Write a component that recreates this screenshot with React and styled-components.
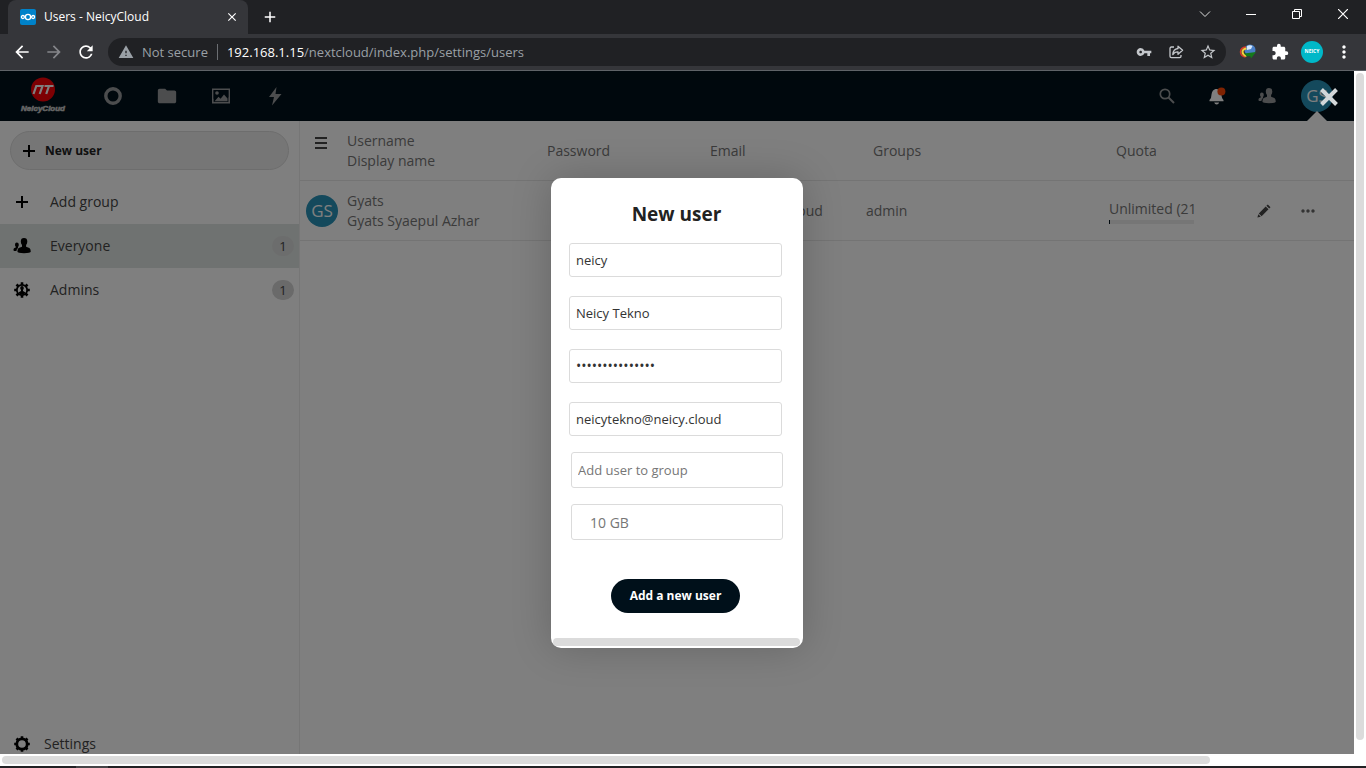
import React from "react";
import styled, { createGlobalStyle } from "styled-components";
import {
  MdAdd, MdArrowBack, MdArrowForward, MdClose, MdExtension, MdFolder,
  MdMoreHoriz, MdMoreVert, MdRefresh, MdStarBorder,
  MdVpnKey, MdWarning,
} from "react-icons/md";

const GlobalStyle = createGlobalStyle`
  *, *::before, *::after { box-sizing: border-box; }
  body { margin: 0; font-family: "Open Sans", "Noto Sans", sans-serif; font-size: 14px; line-height: 20px; }
  button, input, select { font-family: inherit; margin: 0; }
  a { color: inherit; text-decoration: none; }
  svg { display: block; flex: none; }
`;

/* ---------- browser chrome ---------- */
const Browser = styled.div`
  height: 100vh;
  display: flex;
  flex-direction: column;
  overflow: hidden;
  background: #fff;
`;
const TabStrip = styled.div`
  height: 34px;
  display: flex;
  align-items: center;
  padding-left: 8px;
  background: #202124;
  color: #fff;
`;
const Tab = styled.div`
  width: 240px;
  height: 34px;
  padding: 0 8px 0 12px;
  display: flex;
  align-items: center;
  gap: 8px;
  border-radius: 8px 8px 0 0;
  background: #35363a;
  font-size: 12px;
`;
const TabTitle = styled.span`
  flex: 1;
`;
const PlainButton = styled.button`
  width: ${(p) => p.$width || 16}px;
  height: ${(p) => p.$height || 16}px;
  padding: 0;
  border: 0;
  background: none;
  color: ${(p) => p.$color || "inherit"};
  display: flex;
  align-items: center;
  justify-content: center;
  flex: none;
`;
const NewTab = styled(PlainButton)`
  margin-left: 12px;
`;
const WindowControls = styled.div`
  margin-left: auto;
  height: 28px;
  align-self: flex-start;
  display: flex;
`;
const Toolbar = styled.div`
  height: 37px;
  display: flex;
  align-items: center;
  padding: 0 6px;
  background: #35363a;
  border-bottom: 1px solid #5f6368;
  color: #fff;
`;
const AddressBar = styled.div`
  flex: 1;
  height: 28px;
  margin: 0 6px;
  padding: 0 10px;
  display: flex;
  align-items: center;
  border-radius: 14px;
  background: #202124;
  color: #9aa0a6;
  font-size: 13px;
`;
const Security = styled.span`
  margin-left: 8px;
  padding-right: 9px;
  border-right: 1px solid #6b6e72;
  line-height: 16px;
`;
const Address = styled.span`
  flex: 1;
  padding-left: 9px;
  b { font-weight: 400; color: #fff; }
`;
const AddressActions = styled.div`
  display: flex;
  gap: 16px;
  color: #c4c7cb;
`;
const Profile = styled.span`
  width: 22px;
  height: 22px;
  border-radius: 50%;
  background: #00b8c8;
  color: #fff;
  font-size: 5px;
  font-weight: 700;
  line-height: 20px;
  text-align: center;
`;

/* ---------- page viewport ---------- */
const Frame = styled.div`
  flex: 1;
  min-height: 0;
  display: grid;
  grid-template-columns: 1fr 12px;
  grid-template-rows: minmax(0, 1fr) 12px;
`;
const Viewport = styled.div`
  position: relative;
  display: flex;
  flex-direction: column;
  overflow: hidden;
  background: #fff;
`;
const VerticalTrack = styled.div`
  padding: 2px 2px 14px;
`;
const HorizontalTrack = styled.div`
  padding: 2px;
`;
const Thumb = styled.div`
  width: ${(p) => p.$width || "100%"};
  height: ${(p) => p.$height || "8px"};
  border-radius: 4px;
  background: #dbdbdb;
`;
const Taskbar = styled.div`
  height: 2px;
  padding-left: 76px;
  background: #222124;
`;
const TaskbarItem = styled.div`
  width: 32px;
  height: 2px;
  background: #454447;
`;

/* ---------- app header ---------- */
const Header = styled.header`
  height: 50px;
  flex: none;
  display: flex;
  align-items: center;
  justify-content: space-between;
  padding: 0 21px 0 19px;
  background: #00101a;
  color: #999b9d;
`;
const HeaderGroup = styled.nav`
  display: flex;
  align-items: center;
`;
const Logo = styled.a`
  width: 48px;
  margin-right: 19px;
`;
const AppLink = styled.a`
  width: ${(p) => p.$width || 54}px;
  height: 50px;
  display: flex;
  align-items: center;
  justify-content: center;
`;
const UserMenu = styled.a`
  position: relative;
  height: 50px;
  margin-left: 9px;
  display: flex;
  align-items: center;
  &::after {
    content: "";
    position: absolute;
    bottom: 0;
    left: 6px;
    border: 10px solid transparent;
    border-top-width: 0;
    border-bottom-color: #fff;
  }
`;
const Avatar = styled.span`
  width: 32px;
  height: 32px;
  display: block;
  border-radius: 50%;
  background: #2892b8;
  color: #fff;
  font-size: 17px;
  line-height: 32px;
  text-align: center;
`;

/* ---------- sidebar ---------- */
const Main = styled.div`
  flex: 1;
  min-height: 0;
  display: flex;
`;
const Sidebar = styled.aside`
  width: 300px;
  flex: none;
  display: flex;
  flex-direction: column;
  border-right: 1px solid #ededed;
  color: #222;
`;
const NewUser = styled.button`
  height: 39px;
  flex: none;
  margin: 10px 10px;
  padding: 0 9px;
  display: flex;
  align-items: center;
  gap: 7px;
  border: 1px solid #dbdbdb;
  border-radius: 20px;
  background: #ededed;
  color: #222;
  font-size: 12px;
  font-weight: 700;
  svg { color: #000; }
`;
const NavItem = styled.a`
  height: 44px;
  flex: none;
  padding: 0 5px 0 13px;
  display: flex;
  align-items: center;
  gap: ${(p) => p.$gap || 19}px;
  background: ${(p) => (p.$active ? "#dfe4e2" : "transparent")};
  font-size: 14px;
  color: #444;
  svg { color: #000; }
`;
const NavLabel = styled.span`
  flex: 1;
`;
const Counter = styled.span`
  width: 22px;
  height: 20px;
  border-radius: 10px;
  background: ${(p) => (p.$soft ? "#d9dbda" : "#d4d4d4")};
  font-size: 13px;
  text-align: center;
`;
const SidebarFooter = styled.div`
  height: 32px;
  margin-top: auto;
`;

/* ---------- users table ---------- */
const Content = styled.main`
  flex: 1;
  min-width: 0;
`;
const Users = styled.table`
  width: 100%;
  table-layout: fixed;
  border-collapse: separate;
  border-spacing: 0;
  color: #767676;
`;
const Row = styled.tr`
  height: 60px;
`;
const HeadCell = styled.th`
  height: 60px;
  padding: 1px 0 0 ${(p) => p.$indent || 0}px;
  border-bottom: 1px solid #e8e8e8;
  font-weight: 400;
  text-align: left;
  vertical-align: ${(p) => p.$align || "middle"};
`;
const Cell = styled.td`
  height: 60px;
  padding: 1px 0 0 ${(p) => p.$indent || 0}px;
  border-bottom: 1px solid #e8e8e8;
  white-space: nowrap;
`;
const Quota = styled.div`
  width: 85px;
  overflow: hidden;
`;
const QuotaBar = styled.div`
  height: 4px;
  margin-top: 1px;
  background: #ededed;
  border-left: 1px solid #00101a;
`;

/* ---------- dialog ---------- */
const Overlay = styled.div`
  position: absolute;
  inset: 0;
  display: flex;
  align-items: center;
  justify-content: center;
  background: rgba(0, 0, 0, 0.5);
`;
const CloseDialog = styled(PlainButton)`
  position: absolute;
  top: 16px;
  right: 15px;
`;
const Dialog = styled.form`
  width: 252px;
  height: 470px;
  padding: 22px 3px 2px 2px;
  display: flex;
  flex-direction: column;
  border-radius: 10px;
  background: #fff;
  box-shadow: 0 0 40px rgba(0, 0, 0, 0.2);
  overflow: hidden;
`;
const Title = styled.h2`
  margin: 0 0 15px;
  font-size: 19px;
  line-height: 28px;
  font-weight: 700;
  color: #222;
  text-align: center;
`;
const Fields = styled.div`
  display: flex;
  flex-direction: column;
  gap: ${(p) => p.$gap}px;
  padding: ${(p) => p.$padding};
`;
const Field = styled.input`
  width: 100%;
  height: ${(p) => p.$height || 34}px;
  padding: 0 6px;
  border: 1px solid #dbdbdb;
  border-radius: 3px;
  background: #fff;
  color: #333;
  font-size: 13px;
  outline: 0;
  &[type="password"] { font-size: 14px; }
  &::placeholder { color: #767676; opacity: 1; }
`;
const QuotaSelect = styled.select`
  width: 100%;
  height: 36px;
  padding: 1px 18px 0;
  border: 1px solid #dbdbdb;
  border-radius: 3px;
  background: #fff;
  color: #767676;
  font-size: 14px;
  appearance: none;
`;
const Submit = styled.button`
  width: 129px;
  height: 34px;
  margin: 39px 0 25px 58px;
  padding: 0;
  border: 0;
  border-radius: 17px;
  background: #00101a;
  color: #fff;
  font-size: 12px;
  font-weight: 700;
`;

/* ---------- drawings ---------- */
const Favicon = () => (
  <svg width="16" height="16" viewBox="0 0 16 16">
    <rect width="16" height="16" rx="2" fill="#0082c9" />
    <g fill="none" stroke="#fff" strokeWidth="1.3">
      <circle cx="8" cy="8" r="2.6" /><circle cx="2.9" cy="8" r="1.5" /><circle cx="13.1" cy="8" r="1.5" />
    </g>
  </svg>
);
const Chevron = () => (
  <svg width="12" height="12" viewBox="0 0 12 12" fill="none" stroke="#ddd"><path d="M1 3.5 6 8.5 11 3.5" /></svg>
);
const Minimize = () => (
  <svg width="10" height="10" viewBox="0 0 10 10"><path d="M0 5h10v1H0z" fill="#fff" /></svg>
);
const Restore = () => (
  <svg width="10" height="10" viewBox="0 0 10 10" fill="none" stroke="#fff"><path d="M.5 2.5h7v7h-7zM2.500 2.500v-2h7v7h-2" /></svg>
);
const WindowClose = () => (
  <svg width="10" height="10" viewBox="0 0 10 10" stroke="#fff" strokeWidth="1.2"><path d="M0 0 10 10M10 0 0 10" /></svg>
);
const Share = () => (
  <svg width="16" height="16" viewBox="0 0 16 16" fill="none" stroke="currentColor" strokeWidth="1.3" strokeLinejoin="round">
    <path d="M6 3H3.4Q2 3 2 4.4v7.9q0 1.4 1.4 1.4h8.2q1.4 0 1.4-1.4V11" />
    <path d="M10 2.2 14.6 6.2 10 10.2V7.9Q6.6 7.8 4.8 10.6 5.2 5 10 4.500z" />
  </svg>
);
const Globe = () => (
  <svg width="18" height="16" viewBox="0 0 18 16">
    <circle cx="11" cy="6" r="5.5" fill="#4a80c8" />
    <path d="M8 2q3-1.500 5.500 0L12 5 8 6z" fill="#d6e8fb" />
    <path d="M7 3Q1.500 3.500 1.500 8q.2 4 5 5" fill="none" stroke="#d93a2b" strokeWidth="1.500" />
    <path d="M7.500 4.500Q3.500 5 3.500 8q.2 3 4 4" fill="none" stroke="#f1d13a" strokeWidth="2" />
    <path d="M5 9.500 17 8l-5 6.500-.8-2.500Q7 13 5 9.500z" fill="#157a1b" />
  </svg>
);
const Brand = () => (
  <svg width="48" height="38" viewBox="0 0 48 38">
    <circle cx="24" cy="12.500" r="12" fill="#fb0007" />
    <path d="M14.500 17 17.300 9h6.200l-2.800 8M25.500 9h9M30 9 27.200 17" fill="none" stroke="#fff" strokeWidth="2.200" />
    <text x="2" y="34" fill="#c8c8c8" stroke="#c8c8c8" strokeWidth=".6" fontFamily="Liberation Sans Narrow, Liberation Sans, sans-serif" fontSize="8" fontWeight="700" fontStyle="italic">NeicyCloud</text>
  </svg>
);
const Ring = () => (
  <svg width="20" height="20" viewBox="0 0 20 20"><circle cx="10" cy="10" r="7.2" fill="none" stroke="currentColor" strokeWidth="3.4" /></svg>
);
const Photos = () => (
  <svg width="20" height="20" viewBox="0 0 20 20">
    <path fill="currentColor" fillRule="evenodd" d="M1 2.500h18v15H1zM2.600 4.100v9l3.400-3 2.500 2.400 5-5 3.900 4V4.100z" />
    <path fill="#00101a" d="M2.600 4.100h14.800v11.800H2.600z" />
    <path fill="currentColor" d="M3.600 15.300 7.500 10.800 9.600 12.700 13 8.500 16.500 12.500V15.300z" />
    <circle cx="6" cy="7" r="1.8" fill="currentColor" />
  </svg>
);
const Bolt = () => (
  <svg width="18" height="20" viewBox="0 0 18 20"><path fill="currentColor" d="M10.500 1 3 11h5l-2 8.500L15.500 8h-6z" /></svg>
);
const Search = () => (
  <svg width="18" height="18" viewBox="0 0 18 18" fill="none" stroke="currentColor"><circle cx="7" cy="7" r="4.700" strokeWidth="1.700" /><path d="M10.500 10.500 16 16" strokeWidth="2" /></svg>
);
const Bell = () => (
  <svg width="18" height="20" viewBox="0 0 18 20">
    <path fill="#fff" d="M9 3q4 1 4.400 5 .2 4.500 2.100 6v1.200h-14V14q2-1.600 2.100-6Q4.200 4 7.500 3z" />
    <path fill="#fff" d="M6.200 16.500h5Q10.500 18.500 8.700 18.500 6.800 18.500 6.200 16.500z" />
    <circle cx="13.400" cy="5.400" r="4" fill="#ff4402" />
  </svg>
);
const People = () => (
  <svg width="18" height="18" viewBox="0 0 18 18" fill="currentColor">
    <path d="M11 1q3.300 0 3.300 3.400 0 2.100-1.200 3.600v1.700l3.300 1.300q1.200.6 1.400 3.500-.2 1.700-6.800 1.700-6.500 0-6.600-1.700.1-2.900 1.300-3.500L9 9.700V8Q7.800 6.500 7.800 4.400 7.800 1 11 1z" />
    <path d="M3.800 5.500q2 0 2 2.200 0 1.400-.8 2.200v1.200q-1.400 1-1.600 3Q.5 14 .4 13.200q0-1.700 1-2.200l1.400-.6v-.6Q2 9.100 2 7.700q0-2.200 1.800-2.200z" />
  </svg>
);
const SmallPeople = styled(People)``;
const Cog = ({ person }) => (
  <svg width="18" height="18" viewBox="0 0 18 18">
    <circle cx="9" cy="9" r="5.200" fill="none" stroke="currentColor" strokeWidth={person ? 1.8 : 2.8} />
    <g stroke="currentColor" strokeWidth="2.600">
      <path d="M9 1.200v3M9 13.800v3M1.200 9h3M13.800 9h3M3.500 3.500l2 2M12.500 12.500l2 2M3.500 14.500l2-2M12.500 5.500l2-2" />
    </g>
    {person && <path fill="currentColor" d="M9 5q1.800 0 1.800 2 0 1.200-.8 2v1l2.200 1.200-1 2.300H6.800l-1-2.300L8 10V9Q7.200 8.200 7.200 7q0-2 1.800-2z" />}
  </svg>
);
const Menu = () => (
  <svg width="12" height="12" viewBox="0 0 12 12" fill="#444"><path d="M0 0h12v2H0zM0 5h12v2H0zM0 10h12v2H0z" /></svg>
);
const Pencil = () => (
  <svg width="14" height="14" viewBox="0 0 14 14" fill="#444"><path d="M10.800.5 13.500 3.200 12.200 4.600 9.400 1.800zM8.700 2.500 11.500 5.300 4.600 12.200 1.800 9.400zM1.300 10.200 3.800 12.700.4 13.600z" /></svg>
);
const Cross = () => (
  <svg width="20" height="20" viewBox="0 0 20 20" stroke="#d3d7d9" strokeWidth="4"><path d="M2.500 2.500 17.500 17.500M17.500 2.500 2.500 17.500" /></svg>
);
const Plus = () => (
  <svg width="18" height="18" viewBox="0 0 18 18" fill="currentColor"><path d="M8 3h2v5h5v2h-5v5H8v-5H3V8h5z" /></svg>
);

export default function App() {
  return (
    <Browser>
      <GlobalStyle />
      <TabStrip>
        <Tab>
          <Favicon />
          <TabTitle>Users - NeicyCloud</TabTitle>
          <PlainButton aria-label="Close tab"><MdClose size={14} /></PlainButton>
        </Tab>
        <NewTab aria-label="New tab" $width={20} $height={20}><MdAdd size={18} /></NewTab>
        <WindowControls>
          <PlainButton aria-label="Search tabs" $width={46} $height={28}><Chevron /></PlainButton>
          <PlainButton aria-label="Minimize" $width={46} $height={28}><Minimize /></PlainButton>
          <PlainButton aria-label="Restore" $width={46} $height={28}><Restore /></PlainButton>
          <PlainButton aria-label="Close" $width={46} $height={28}><WindowClose /></PlainButton>
        </WindowControls>
      </TabStrip>
      <Toolbar>
        <PlainButton aria-label="Back" $width={32} $height={28}><MdArrowBack size={20} /></PlainButton>
        <PlainButton aria-label="Forward" $width={32} $height={28} $color="#85868a"><MdArrowForward size={20} /></PlainButton>
        <PlainButton aria-label="Reload" $width={32} $height={28}><MdRefresh size={20} /></PlainButton>
        <AddressBar>
          <MdWarning size={16} />
          <Security>Not secure</Security>
          <Address><b>192.168.1.15</b>/nextcloud/index.php/settings/users</Address>
          <AddressActions>
            <PlainButton aria-label="Passwords"><MdVpnKey size={16} /></PlainButton>
            <PlainButton aria-label="Share"><Share /></PlainButton>
            <PlainButton aria-label="Bookmark"><MdStarBorder size={18} /></PlainButton>
          </AddressActions>
        </AddressBar>
        <PlainButton aria-label="Download manager" $width={32} $height={28}><Globe /></PlainButton>
        <PlainButton aria-label="Extensions" $width={32} $height={28}><MdExtension size={18} /></PlainButton>
        <PlainButton aria-label="Profile" $width={32} $height={28}><Profile>NEICY</Profile></PlainButton>
        <PlainButton aria-label="Browser menu" $width={32} $height={28}><MdMoreVert size={20} /></PlainButton>
      </Toolbar>

      <Frame>
        <Viewport>
          <Header>
            <HeaderGroup>
              <Logo href="#home" aria-label="NeicyCloud"><Brand /></Logo>
              <AppLink href="#dashboard" aria-label="Dashboard"><Ring /></AppLink>
              <AppLink href="#files" aria-label="Files"><MdFolder size={22} /></AppLink>
              <AppLink href="#photos" aria-label="Photos"><Photos /></AppLink>
              <AppLink href="#activity" aria-label="Activity"><Bolt /></AppLink>
            </HeaderGroup>
            <HeaderGroup>
              <AppLink $width={50} href="#search" aria-label="Search"><Search /></AppLink>
              <AppLink $width={50} href="#notifications" aria-label="Notifications"><Bell /></AppLink>
              <AppLink $width={50} href="#contacts" aria-label="Contacts"><People /></AppLink>
              <UserMenu href="#account"><Avatar>GS</Avatar></UserMenu>
            </HeaderGroup>
          </Header>
          <Main>
            <Sidebar>
              <NewUser><Plus />New user</NewUser>
              <NavItem href="#add"><Plus /><NavLabel>Add group</NavLabel></NavItem>
              <NavItem href="#everyone" $active><SmallPeople /><NavLabel>Everyone</NavLabel><Counter $soft>1</Counter></NavItem>
              <NavItem href="#admins"><Cog person /><NavLabel>Admins</NavLabel><Counter>1</Counter></NavItem>
              <SidebarFooter>
                <NavItem href="#settings" $gap={13}><Cog /><NavLabel>Settings</NavLabel></NavItem>
              </SidebarFooter>
            </Sidebar>
            <Content>
              <Users>
                <colgroup>
                  <col width="47" /><col width="193" /><col width="163" /><col width="163" />
                  <col width="243" /><col width="133" /><col width="44" /><col />
                </colgroup>
                <thead>
                  <Row>
                    <HeadCell $indent={15} $align="top"><PlainButton aria-label="Toggle sidebar" $width={12} $height={42}><Menu /></PlainButton></HeadCell>
                    <HeadCell>Username<br />Display name</HeadCell>
                    <HeadCell $indent={7}>Password</HeadCell>
                    <HeadCell $indent={7}>Email</HeadCell>
                    <HeadCell $indent={7}>Groups</HeadCell>
                    <HeadCell $indent={7}>Quota</HeadCell>
                    <HeadCell />
                    <HeadCell />
                  </Row>
                </thead>
                <tbody>
                  <Row>
                    <Cell $indent={6}><Avatar>GS</Avatar></Cell>
                    <Cell>Gyats<br />Gyats Syaepul Azhar</Cell>
                    <Cell />
                    <Cell>gyats@neicy.cloud</Cell>
                    <Cell>admin</Cell>
                    <Cell><Quota>Unlimited (21 GB)<QuotaBar /></Quota></Cell>
                    <Cell $indent={14}><PlainButton aria-label="Edit user"><Pencil /></PlainButton></Cell>
                    <Cell $indent={14}><PlainButton aria-label="More actions" $color="#666"><MdMoreHoriz size={20} /></PlainButton></Cell>
                  </Row>
                </tbody>
              </Users>
            </Content>
          </Main>
          <Overlay>
            <Dialog onSubmit={(e) => e.preventDefault()}>
              <Title>New user</Title>
              <Fields $gap={19} $padding="0 18px 0 16px">
                <Field aria-label="Username" defaultValue="neicy" />
                <Field aria-label="Display name" defaultValue="Neicy Tekno" />
                <Field aria-label="Password" type="password" defaultValue="neicytekno12345" />
                <Field aria-label="Email" type="email" defaultValue="neicytekno@neicy.cloud" />
              </Fields>
              <Fields $gap={16} $padding="16px 17px 0 18px">
                <Field $height={36} aria-label="Groups" placeholder="Add user to group" />
                <QuotaSelect aria-label="Quota" defaultValue="10"><option value="10">10 GB</option></QuotaSelect>
              </Fields>
              <Submit>Add a new user</Submit>
              <Thumb />
            </Dialog>
            <CloseDialog type="button" aria-label="Close dialog" $width={20} $height={20}><Cross /></CloseDialog>
          </Overlay>
        </Viewport>
        <VerticalTrack><Thumb $height="100%" /></VerticalTrack>
        <HorizontalTrack><Thumb $width="89.5%" /></HorizontalTrack>
      </Frame>
      <Taskbar><TaskbarItem /></Taskbar>
    </Browser>
  );
}
